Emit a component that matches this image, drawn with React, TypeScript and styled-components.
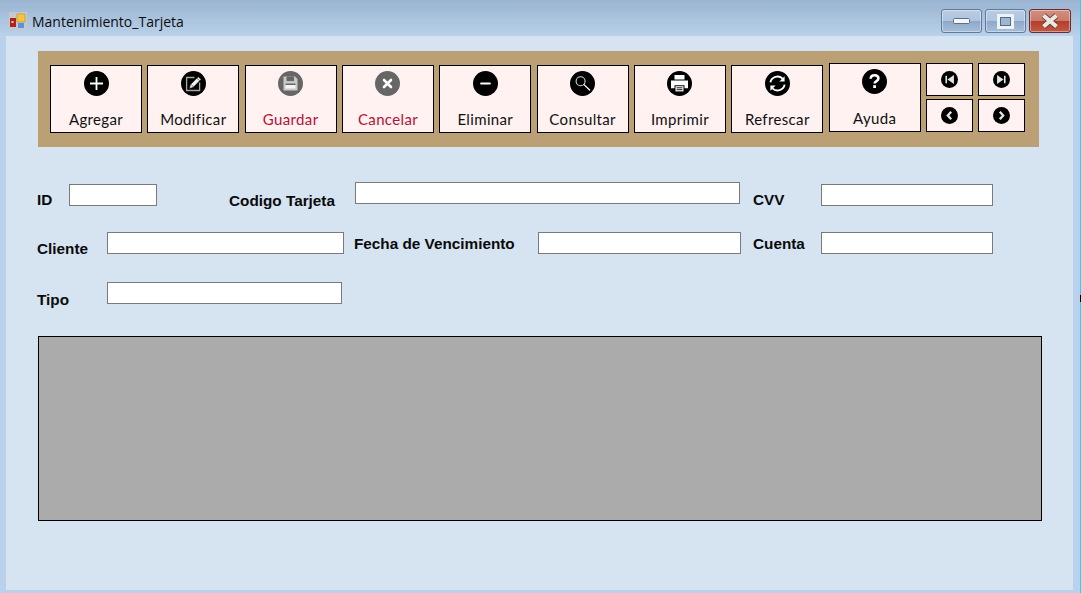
import React from 'react';
import styled, { createGlobalStyle } from 'styled-components';

const GlobalStyle = createGlobalStyle`
  html, body {
    margin: 0;
    padding: 0;
    overflow: hidden;
  }
`;

const Window = styled.div`
  position: relative;
  width: 1081px;
  height: 593px;
  display: flex;
  flex-direction: column;
  box-sizing: border-box;
  border-right: 1px solid #29d3f5;
  background: linear-gradient(#99b4d1 0, #b9d1ea 36px, #b9d1ea 100%);

  &::after {
    content: '';
    position: absolute;
    top: 295px;
    right: -1px;
    width: 1px;
    height: 7px;
    background: #000;
  }
`;

const TitleBar = styled.header`
  height: 36px;
  flex: none;
  display: flex;
  align-items: flex-start;
  padding: 9px 9px 0 9px;
  box-sizing: border-box;
`;

const AppIcon = styled.svg`
  width: 18px;
  height: 18px;
  margin: 3px 5px 0 0;
`;

const Title = styled.span`
  font: 14px/26px 'Open Sans', sans-serif;
  color: #0c0c0c;
  flex: 1;
`;

const Controls = styled.div`
  display: flex;
  gap: 3px;
`;

const ControlButton = styled.div<{ $close?: boolean }>`
  width: ${(p) => (p.$close ? '42px' : '41px')};
  height: 24px;
  box-sizing: border-box;
  border: 1px solid ${(p) => (p.$close ? '#6e2a34' : '#5f7a9c')};
  border-radius: 3px;
  display: flex;
  align-items: center;
  justify-content: center;
  box-shadow: inset 0 0 0 1px rgba(255, 255, 255, 0.4);
  background: ${(p) =>
    p.$close
      ? 'linear-gradient(#d2907f 0, #c97a68 48%, #b23f29 52%, #c25a45 100%)'
      : 'linear-gradient(#b9cde3 0, #aec5de 48%, #8ea9c8 52%, #a5bedA 100%)'};
`;

const Client = styled.main`
  flex: 1;
  margin: 0 7px 3px 6px;
  padding: 15px 0 0 32px;
  background: #d6e4f2;
  display: flex;
  flex-direction: column;
`;

const Toolbar = styled.div`
  width: 1001px;
  height: 96px;
  box-sizing: border-box;
  padding: 12px 0 0 12px;
  background: #bba076;
  display: grid;
  grid-template-columns: repeat(9, 92px) 47px 47px;
  column-gap: 5.33px;
  align-items: start;
`;

const ToolButton = styled.button<{ $disabled?: boolean; $help?: boolean }>`
  width: 92px;
  height: ${(p) => (p.$help ? '69px' : '68px')};
  margin-top: ${(p) => (p.$help ? '0' : '2px')};
  padding: 5px 0 0;
  box-sizing: border-box;
  border: 1px solid #000;
  background: #fff2f1;
  display: flex;
  flex-direction: column;
  align-items: center;
  color: ${(p) => (p.$disabled ? '#b80f35' : '#101010')};
  font: 15px/18px Lato, sans-serif;
  letter-spacing: 0.35px;
`;

const ToolLabel = styled.span<{ $help?: boolean }>`
  margin-top: ${(p) => (p.$help ? '15px' : '14px')};
`;

const Glyph = styled.svg<{ $size: number }>`
  width: ${(p) => p.$size}px;
  height: ${(p) => p.$size}px;
  flex: none;
`;

const NavStack = styled.div`
  display: grid;
  row-gap: 3px;
`;

const NavButton = styled.button`
  width: 47px;
  height: 33px;
  padding: 0;
  box-sizing: border-box;
  border: 1px solid #000;
  background: #fff2f1;
  display: flex;
  align-items: center;
  justify-content: center;
`;

const Form = styled.form`
  margin: 0 0 0 -1px;
  display: flex;
  flex-direction: column;
`;

const FormRow = styled.div<{ $top: number }>`
  display: flex;
  align-items: flex-start;
  margin-top: ${(p) => p.$top}px;
  height: 22px;
`;

const FieldLabel = styled.label<{ $width: number; $drop: number }>`
  width: ${(p) => p.$width}px;
  flex: none;
  margin-top: ${(p) => p.$drop}px;
  font: bold 15.3px/18px 'Liberation Sans', sans-serif;
  color: #0a0a0a;
  white-space: nowrap;
`;

const TextBox = styled.div<{ $width: number; $top?: number; $gapAfter?: number }>`
  width: ${(p) => p.$width}px;
  height: 22px;
  flex: none;
  box-sizing: border-box;
  margin-top: ${(p) => p.$top ?? 0}px;
  margin-right: ${(p) => p.$gapAfter ?? 0}px;
  border: 1px solid #7a7a7a;
  background: #fff;
`;

const DataGrid = styled.div`
  width: 1004px;
  height: 185px;
  margin-top: 32px;
  box-sizing: border-box;
  border: 1px solid #000;
  background: #ababab;
`;

type IconProps = { tone?: string; size?: number; children: React.ReactNode };

const Disc = ({ tone = '#000', size = 25, children }: IconProps) => (
  <Glyph $size={size} viewBox="0 0 25 25">
    <circle cx="12.5" cy="12.5" r="12.5" fill={tone} />
    {children}
  </Glyph>
);

const white = { stroke: '#fff', fill: 'none', strokeLinecap: 'round' as const };

const tools: { label: string; disabled?: boolean; glyph: React.ReactNode }[] = [
  {
    label: 'Agregar',
    glyph: <path {...white} strokeLinecap="butt" strokeWidth="1.8" d="M12.5 6v13M6 12.5h13" />,
  },
  {
    label: 'Modificar',
    glyph: (
      <>
        <path fill="none" stroke="#a8a8a8" strokeWidth="1.3" d="M13.5 6.5H5.6v13h13v-8" />
        <path fill="#f2f2f2" stroke="#000" strokeWidth=".5" d="M8.4 17.4l.9-3.6 8-8 2.7 2.7-8 8z" />
        <path stroke="#000" strokeWidth=".6" fill="none" d="M10 13.4l2.4 2.4M16 7.2l2.5 2.5" />
      </>
    ),
  },
  {
    label: 'Guardar',
    disabled: true,
    glyph: (
      <>
        <path fill="#c9c9c9" d="M5.5 5.5h11.5l2.5 2.5v11.5h-14z" />
        <path fill="#666" d="M8.5 5.5h7.5v4.6H8.5z" />
        <path fill="#666" d="M7.5 12.5h10v1.5h-10z" />
        <path fill="#f4f4f4" d="M7.5 14h10v3.5h-10z" />
      </>
    ),
  },
  {
    label: 'Cancelar',
    disabled: true,
    glyph: <path {...white} strokeWidth="2.6" d="M9 9l7 7M16 9l-7 7" />,
  },
  {
    label: 'Eliminar',
    glyph: <path {...white} strokeWidth="2.2" d="M8.2 12.5h8.6" />,
  },
  {
    label: 'Consultar',
    glyph: (
      <>
        <circle stroke="#d8d8d8" fill="none" strokeWidth="1.1" cx="10.6" cy="10.2" r="4.5" />
        <path {...white} strokeWidth="1.3" d="M14 13.6l5.6 5.4" />
      </>
    ),
  },
  {
    label: 'Imprimir',
    glyph: (
      <>
        <path fill="#fff" d="M7.5 4h10v4.6h-10zM4 9.6h17v7.6h-3.5v-3h-10v3H4z" />
        <path fill="#fff" d="M8.5 15.2h8v5.2h-8z" />
        <path stroke="#000" strokeWidth=".9" d="M9.6 16.8h5.8M9.6 18.7h5.8" />
      </>
    ),
  },
  {
    label: 'Refrescar',
    glyph: (
      <>
        <path {...white} strokeWidth="1.9" strokeLinecap="butt" d="M5.4 11.4a7.2 7.2 0 0 1 12.2-3.7M19.6 13.6a7.2 7.2 0 0 1-12.2 3.7" />
        <path fill="#fff" d="M19.6 5.2v5.2h-5.2zM5.4 19.8v-5.2h5.2z" />
      </>
    ),
  },
  {
    label: 'Ayuda',
    glyph: (
      <>
        <path {...white} strokeWidth="2.6" strokeLinecap="butt" d="M8.7 9.8c0-2.4 1.8-3.6 3.9-3.6s3.8 1.2 3.8 3.2c0 2.7-3.8 2.6-3.8 5.2" />
        <rect x="11.2" y="16.2" width="2.8" height="2.8" fill="#fff" />
      </>
    ),
  },
];

const navGlyphs = {
  first: <path fill="#e4e4e4" d="M6.5 7h2.4v11H6.5zM19 6v13l-9.5-6.5z" />,
  last: <path fill="#e4e4e4" d="M16.1 7h2.4v11h-2.4zM6 6v13l9.5-6.5z" />,
  prev: <path stroke="#e4e4e4" fill="none" strokeWidth="3.4" d="M15 7l-5 5.5 5 5.5" />,
  next: <path stroke="#e4e4e4" fill="none" strokeWidth="3.4" d="M10 7l5 5.5-5 5.5" />,
};

const NavIcon = ({ glyph }: { glyph: React.ReactNode }) => (
  <NavButton type="button">
    <Disc size={17}>{glyph}</Disc>
  </NavButton>
);

const App = () => (
  <>
    <GlobalStyle />
    <Window>
      <TitleBar>
        <AppIcon viewBox="0 0 18 18">
          <rect x="0" y="0" width="18" height="18" fill="#c5c9cf" />
          <rect x="1" y="6" width="6" height="9" fill="#b4201a" />
          <rect x="2.5" y="9" width="2" height="2" fill="#f3d9a0" />
          <rect x="8" y="2" width="8" height="8" fill="#f5c63c" stroke="#b58a20" strokeWidth=".6" />
          <rect x="9" y="11" width="6" height="5" fill="#5c92de" />
        </AppIcon>
        <Title>Mantenimiento_Tarjeta</Title>
        <Controls>
          <ControlButton>
            <svg width="17" height="6" viewBox="0 0 17 6">
              <rect x=".5" y=".5" width="16" height="5" rx="1" fill="#f4f6f9" stroke="#5b6f88" />
            </svg>
          </ControlButton>
          <ControlButton>
            <svg width="17" height="15" viewBox="0 0 17 15">
              <rect x="1.5" y="1.5" width="14" height="12" fill="none" stroke="#eef2f7" strokeWidth="3" />
              <rect x="3.5" y="3.5" width="10" height="8" fill="#9db6d2" stroke="#566a84" />
            </svg>
          </ControlButton>
          <ControlButton $close>
            <svg width="20" height="16" viewBox="0 0 20 16">
              <path d="M3.5 2.5l13 11M16.5 2.5l-13 11" stroke="#6b3a34" strokeWidth="5.6" />
              <path d="M3.5 2.5l13 11M16.5 2.5l-13 11" stroke="#ebe8e4" strokeWidth="4.2" />
            </svg>
          </ControlButton>
        </Controls>
      </TitleBar>
      <Client>
        <Toolbar>
          {tools.map((tool) => (
            <ToolButton
              key={tool.label}
              type="button"
              $disabled={tool.disabled}
              $help={tool.label === 'Ayuda'}
            >
              <Disc tone={tool.disabled ? '#666' : '#000'}>{tool.glyph}</Disc>
              <ToolLabel $help={tool.label === 'Ayuda'}>{tool.label}</ToolLabel>
            </ToolButton>
          ))}
          <NavStack>
            <NavIcon glyph={navGlyphs.first} />
            <NavIcon glyph={navGlyphs.prev} />
          </NavStack>
          <NavStack>
            <NavIcon glyph={navGlyphs.last} />
            <NavIcon glyph={navGlyphs.next} />
          </NavStack>
        </Toolbar>
        <Form>
          <FormRow $top={35}>
            <FieldLabel $width={32} $drop={9}>ID</FieldLabel>
            <TextBox $width={88} $top={2} $gapAfter={72} />
            <FieldLabel $width={126} $drop={10}>Codigo Tarjeta</FieldLabel>
            <TextBox $width={385} $gapAfter={13} />
            <FieldLabel $width={68} $drop={9}>CVV</FieldLabel>
            <TextBox $width={172} $top={2} />
          </FormRow>
          <FormRow $top={28}>
            <FieldLabel $width={70} $drop={8}>Cliente</FieldLabel>
            <TextBox $width={237} $gapAfter={10} />
            <FieldLabel $width={184} $drop={3}>Fecha de Vencimiento</FieldLabel>
            <TextBox $width={203} $gapAfter={12} />
            <FieldLabel $width={68} $drop={3}>Cuenta</FieldLabel>
            <TextBox $width={172} />
          </FormRow>
          <FormRow $top={28}>
            <FieldLabel $width={70} $drop={9}>Tipo</FieldLabel>
            <TextBox $width={235} />
          </FormRow>
        </Form>
        <DataGrid />
      </Client>
    </Window>
  </>
);

export default App;
